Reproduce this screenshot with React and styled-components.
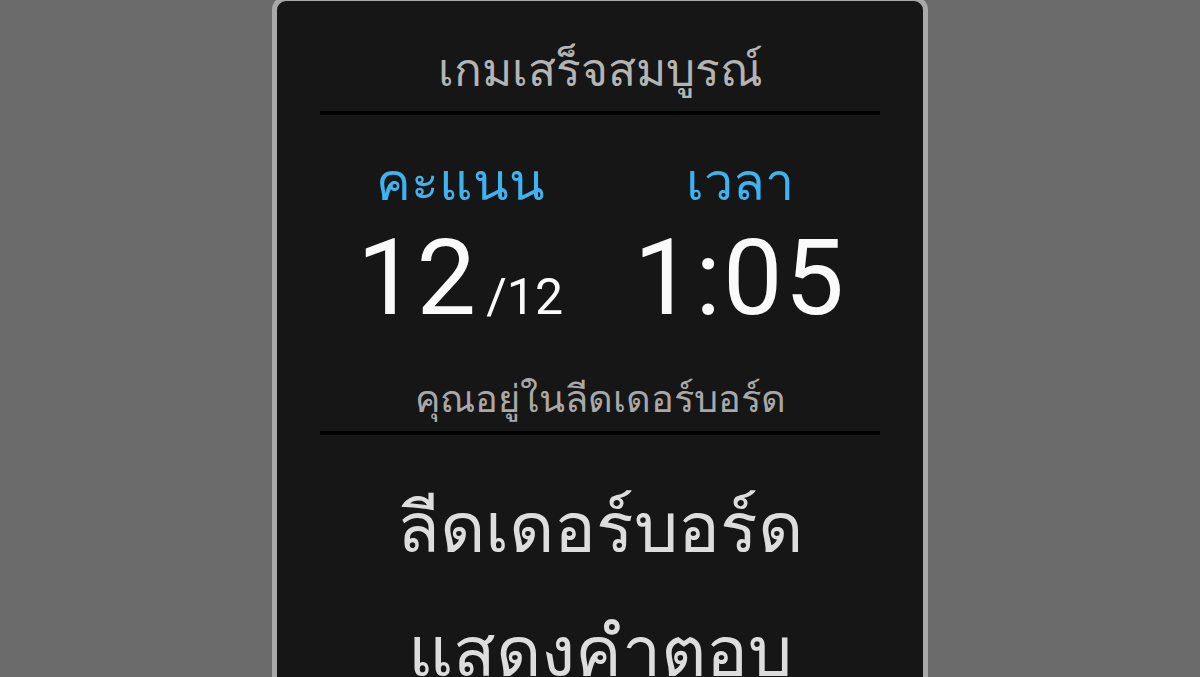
import styled, { createGlobalStyle } from 'styled-components';

const GlobalStyle = createGlobalStyle`
  html, body {
    margin: 0;
    padding: 0;
    background-color: #6b6b6b;
    font-family: "Roboto", "Noto Sans", sans-serif;
    overflow: hidden;
  }
`;

const Page = styled('div')`
  height: 677px;
  display: flex;
  justify-content: center;
  align-items: flex-start;
`;

const Card = styled('div')`
  width: 560px;
  margin-top: -4px;
  padding: 0 43px 40px;
  background-color: #161616;
  border: 5px solid #a9a9a9;
  border-radius: 14px;
  display: flex;
  flex-direction: column;
  align-items: stretch;
`;

const Title = styled('h1')`
  margin: 0;
  padding: 44px 0 16px;
  text-align: center;
  font-size: 46px;
  font-weight: 400;
  line-height: 50px;
  color: #b4b4b4;
`;

const Divider = styled('div')`
  height: 4px;
  background-color: #000;
`;

const Stats = styled('div')`
  display: grid;
  grid-template-columns: 1fr 1fr;
  padding-top: 40px;
`;

const Stat = styled('div')`
  display: flex;
  flex-direction: column;
  align-items: center;
`;

const Label = styled('span')`
  font-size: 52px;
  font-weight: 400;
  line-height: 56px;
  color: #3db3f0;
`;

const Value = styled('span')`
  margin-top: 12px;
  font-size: 106px;
  font-weight: 400;
  line-height: 110px;
  letter-spacing: ${(p) => (p.$spaced ? '2px' : '0')};
  color: #fafafa;

  small {
    font-size: 50px;
    margin-left: 10px;
  }
`;

const Note = styled('p')`
  margin: 0;
  padding: 25px 0 10px;
  text-align: center;
  font-size: 38px;
  line-height: 44px;
  color: #a8a8a8;
`;

const Actions = styled('div')`
  display: flex;
  flex-direction: column;
  align-items: center;
  gap: 34px;
  padding-top: 48px;
`;

const TextButton = styled('button')`
  background: none;
  border: none;
  padding: 0;
  cursor: pointer;
  font-family: inherit;
  font-size: 70px;
  line-height: 90px;
  color: #dddddd;
`;

export default function App() {
  return (
    <>
      <GlobalStyle />
      <Page>
        <Card>
          <Title>เกมเสร็จสมบูรณ์</Title>
          <Divider />
          <Stats>
            <Stat>
              <Label>คะแนน</Label>
              <Value>
                12<small>/12</small>
              </Value>
            </Stat>
            <Stat>
              <Label>เวลา</Label>
              <Value $spaced>1:05</Value>
            </Stat>
          </Stats>
          <Note>คุณอยู่ในลีดเดอร์บอร์ด</Note>
          <Divider />
          <Actions>
            <TextButton>ลีดเดอร์บอร์ด</TextButton>
            <TextButton>แสดงคำตอบ</TextButton>
          </Actions>
        </Card>
      </Page>
    </>
  );
}
